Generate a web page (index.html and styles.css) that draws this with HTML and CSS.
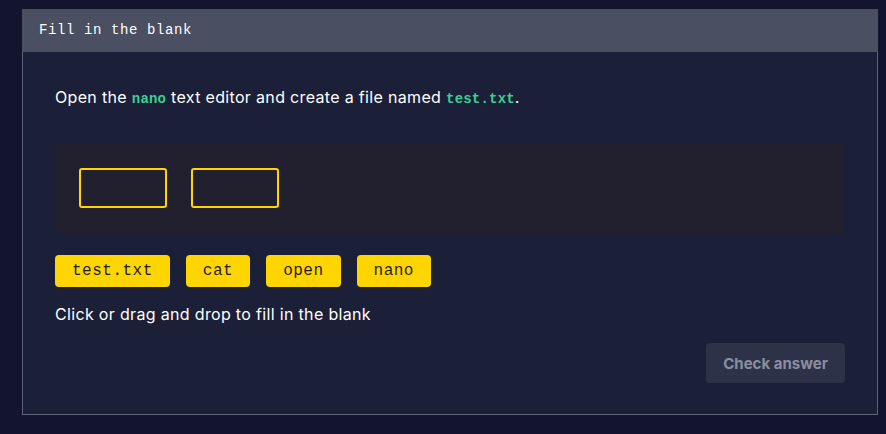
FILE: index.html
```html
<!DOCTYPE html>
<html>
<head>
<meta charset="utf-8">
<link rel="stylesheet" href="styles.css">
</head>
<body>
<div class="card">
  <div class="card-header">Fill in the blank</div>
  <div class="card-body">
    <p class="prompt">Open the <code>nano</code> text editor and create a file named <code>test.txt</code>.</p>
    <div class="code-block">
      <span class="blank"></span>
      <span class="blank"></span>
    </div>
    <div class="chips">
      <button class="chip">test.txt</button>
      <button class="chip">cat</button>
      <button class="chip">open</button>
      <button class="chip">nano</button>
    </div>
    <p class="hint">Click or drag and drop to fill in the blank</p>
    <div class="actions">
      <button class="check">Check answer</button>
    </div>
  </div>
</div>
</body>
</html>
```
FILE: styles.css
```css
html, body {
  margin: 0;
  padding: 0;
}
body {
  background: #13152f;
  width: 886px;
  height: 434px;
  overflow: hidden;
  font-family: Inter, "Open Sans", sans-serif;
  color: #ffffff;
}
.card {
  margin: 9px 0 0 22px;
  width: 854px;
  height: 405px;
  border: 1px solid #5d6274;
  border-top: none;
  background: #1b1f38;
}
.card-header {
  height: 43px;
  box-sizing: border-box;
  margin: 0 -1px;
  background: #4a4f61;
  font-family: "Liberation Mono", "DejaVu Sans Mono", monospace;
  font-size: 14px;
  letter-spacing: 0.6px;
  line-height: 43px;
  padding-left: 17px;
  color: #ffffff;
}
.card-body {
  padding: 35px 32px 0 32px;
}
.prompt {
  margin: 0;
  font-size: 16px;
  line-height: 20px;
  letter-spacing: 0.33px;
}
.prompt code {
  font-family: "Liberation Mono", "DejaVu Sans Mono", monospace;
  font-weight: bold;
  font-size: 14px;
  letter-spacing: 0.2px;
  color: #3ccf91;
}
.code-block {
  margin-top: 35px;
  height: 89px;
  box-sizing: border-box;
  background: #221f2e;
  padding: 24px 23px;
  display: flex;
  gap: 24px;
  margin-right: 1px;
  margin-left: 1px;
}
.blank {
  width: 88px;
  height: 40px;
  box-sizing: border-box;
  border: 2px solid #ffd600;
  border-radius: 3px;
}
.chips {
  margin-top: 22px;
  display: flex;
  gap: 16px;
}
.chip {
  height: 32px;
  padding: 0 17px;
  border: none;
  border-radius: 4px;
  background: #ffd500;
  color: #1f1c22;
  font-family: "Liberation Mono", "DejaVu Sans Mono", monospace;
  font-size: 16px;
  letter-spacing: 0.5px;
  line-height: 32px;
}
.hint {
  margin: 17px 0 0 0;
  font-size: 16px;
  line-height: 20px;
  letter-spacing: 0.33px;
}
.actions {
  display: flex;
  justify-content: flex-end;
  margin-top: 19px;
}
.check {
  width: 139px;
  height: 40px;
  border: none;
  border-radius: 4px;
  background: #2e3248;
  color: #8a8ea0;
  font-family: Inter, "Open Sans", sans-serif;
  font-weight: bold;
  font-size: 15px;
}
```
